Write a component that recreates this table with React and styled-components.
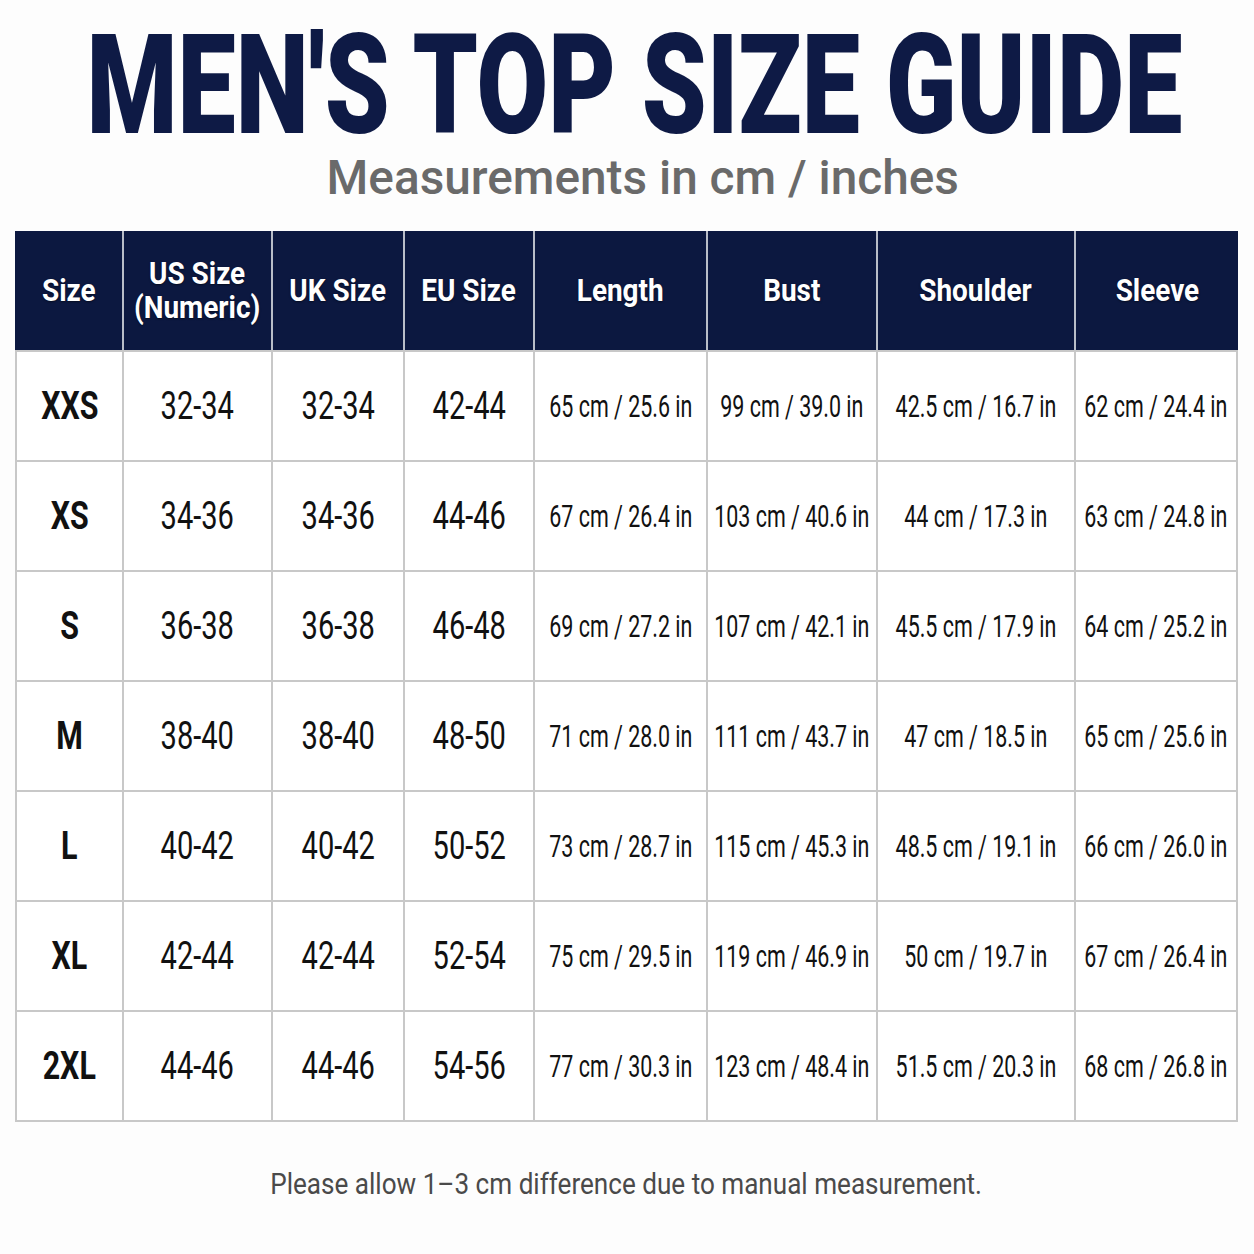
import React from "react";
import styled, { createGlobalStyle } from "styled-components";

const Global = createGlobalStyle`
  html, body { margin: 0; padding: 0; background: #fdfdfd; }
  body { font-family: "Roboto", "Liberation Sans", sans-serif; }
`;

const Page = styled.div`
  width: 1254px;
  height: 1254px;
  box-sizing: border-box;
  padding: 26px 16px 0 15px;
  display: flex;
  flex-direction: column;
  align-items: center;
`;

const Squeeze = styled.span`
  display: inline-block;
  white-space: nowrap;
  transform: scaleX(${(p) => p.$sx});
  transform-origin: center;
`;

const Title = styled.h1`
  margin: 0;
  padding-left: ${(p) => p.$shift || 0}px;
  font-family: "Roboto", sans-serif;
  font-weight: 900;
  font-size: 140px;
  line-height: 118px;
  color: #0e1a45;
  display: flex;
  justify-content: center;
  width: 100%;
  box-sizing: border-box;
`;

const Subtitle = styled.div`
  margin: 6px 0 25px;
  padding-left: ${(p) => p.$shift || 0}px;
  font-family: "Roboto", sans-serif;
  font-weight: 500;
  font-size: 48px;
  line-height: 56px;
  color: #6a6a6a;
  display: flex;
  justify-content: center;
  width: 100%;
  box-sizing: border-box;
`;

const Grid = styled.div`
  display: grid;
  grid-template-columns: 107px 149px 132px 130px 173px 170px 198px 164px;
  grid-template-rows: 119px repeat(7, 110px);
  width: 1223px;
  border-bottom: 2px solid #c8c8c8;
`;

const HeadCell = styled.div`
  background: #0c1840;
  color: #fff;
  display: flex;
  align-items: center;
  justify-content: center;
  text-align: center;
  font-family: "Roboto", sans-serif;
  font-weight: 700;
  font-size: 31px;
  line-height: 34px;
  border-left: ${(p) => (p.$first ? "none" : "2px solid #b9bdc8")};
  text-shadow: 0 1px 2px rgba(0, 0, 0, 0.5);
`;

const sizes = { size: 38, num: 39, meas: 32 };

const Cell = styled.div`
  background: #fff;
  display: flex;
  align-items: center;
  justify-content: center;
  color: #111;
  font-family: "Roboto", sans-serif;
  font-weight: ${(p) => (p.$kind === "size" ? 700 : 400)};
  font-size: ${(p) => sizes[p.$kind]}px;
  border-top: 2px solid #c8c8c8;
  border-left: 2px solid #c8c8c8;
  border-right: ${(p) => (p.$last ? "2px solid #c8c8c8" : "none")};
`;

const Footer = styled.div`
  margin-top: 44px;
  font-family: "Roboto", sans-serif;
  font-weight: 400;
  font-size: 30px;
  color: #4a4a4a;
  display: flex;
  justify-content: center;
  width: 100%;
`;

const SX = { title: 0.742, head: 0.9, size: 0.8, num: 0.745, meas: 0.67, foot: 0.87, sub: 0.995 };

const headers = ["Size", ["US Size", "(Numeric)"], "UK Size", "EU Size", "Length", "Bust", "Shoulder", "Sleeve"];

const rows = [
  ["XXS", "32-34", "32-34", "42-44", "65 cm / 25.6 in", "99 cm / 39.0 in", "42.5 cm / 16.7 in", "62 cm / 24.4 in"],
  ["XS", "34-36", "34-36", "44-46", "67 cm / 26.4 in", "103 cm / 40.6 in", "44 cm / 17.3 in", "63 cm / 24.8 in"],
  ["S", "36-38", "36-38", "46-48", "69 cm / 27.2 in", "107 cm / 42.1 in", "45.5 cm / 17.9 in", "64 cm / 25.2 in"],
  ["M", "38-40", "38-40", "48-50", "71 cm / 28.0 in", "111 cm / 43.7 in", "47 cm / 18.5 in", "65 cm / 25.6 in"],
  ["L", "40-42", "40-42", "50-52", "73 cm / 28.7 in", "115 cm / 45.3 in", "48.5 cm / 19.1 in", "66 cm / 26.0 in"],
  ["XL", "42-44", "42-44", "52-54", "75 cm / 29.5 in", "119 cm / 46.9 in", "50 cm / 19.7 in", "67 cm / 26.4 in"],
  ["2XL", "44-46", "44-46", "54-56", "77 cm / 30.3 in", "123 cm / 48.4 in", "51.5 cm / 20.3 in", "68 cm / 26.8 in"],
];

export default function App() {
  return (
    <Page>
      <Global />
      <Title $shift={16}><Squeeze $sx={SX.title}>MEN'S TOP SIZE GUIDE</Squeeze></Title>
      <Subtitle $shift={32}><Squeeze $sx={SX.sub}>Measurements in cm / inches</Squeeze></Subtitle>
      <Grid>
        {headers.map((h, i) => (
          <HeadCell key={i} $first={i === 0}>
            <Squeeze $sx={SX.head}>{Array.isArray(h) ? <>{h[0]}<br />{h[1]}</> : h}</Squeeze>
          </HeadCell>
        ))}
        {rows.map((r, ri) =>
          r.map((v, ci) => {
            const kind = ci === 0 ? "size" : ci < 4 ? "num" : "meas";
            return (
              <Cell key={ri + "-" + ci} $kind={kind} $last={ci === 7}>
                <Squeeze $sx={SX[kind]}>{v}</Squeeze>
              </Cell>
            );
          })
        )}
      </Grid>
      <Footer><Squeeze $sx={SX.foot}>Please allow 1–3 cm difference due to manual measurement.</Squeeze></Footer>
    </Page>
  );
}
